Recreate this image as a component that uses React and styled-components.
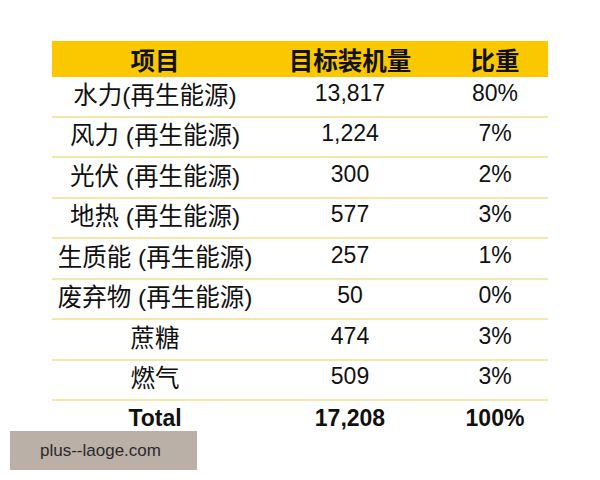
import React from 'react'
import styled, { createGlobalStyle } from 'styled-components'

const GlobalStyle = createGlobalStyle`
  html, body {
    margin: 0;
    padding: 0;
    background: #fff;
  }
  body {
    font-family: "Liberation Sans", "Noto Sans CJK SC", sans-serif;
  }
`

const rows = [
  { name: '水力(再生能源)', amount: '13,817', share: '80%' },
  { name: '风力 (再生能源)', amount: '1,224', share: '7%' },
  { name: '光伏 (再生能源)', amount: '300', share: '2%' },
  { name: '地热 (再生能源)', amount: '577', share: '3%' },
  { name: '生质能 (再生能源)', amount: '257', share: '1%' },
  { name: '废弃物 (再生能源)', amount: '50', share: '0%' },
  { name: '蔗糖', amount: '474', share: '3%' },
  { name: '燃气', amount: '509', share: '3%' },
]

const Page = styled.div`
  position: relative;
  width: 600px;
  height: 480px;
  padding: 41px 52px 0;
  box-sizing: border-box;
  overflow: hidden;
`

const Table = styled.div`
  display: grid;
  grid-template-columns: 206px 184px 106px;
  width: 496px;
`

const Row = styled.div`
  display: contents;
`

const Cell = styled.div`
  display: flex;
  align-items: center;
  justify-content: center;
  box-sizing: border-box;
  white-space: nowrap;
  color: #111;
  font-size: ${(p) => (p.$wide ? '24.5px' : '23px')};
  height: ${(p) => (p.$head ? '36px' : '40.5px')};
  padding-bottom: ${(p) => (p.$head ? '0' : '6px')};
  font-weight: ${(p) => (p.$bold ? 700 : 400)};
  background: ${(p) => (p.$head ? '#fbc800' : 'transparent')};
  border-bottom: ${(p) => (p.$line ? '2px solid #f3e8a8' : 'none')};
`

const Watermark = styled.div`
  position: absolute;
  left: 10px;
  top: 431px;
  width: 187px;
  height: 39px;
  box-sizing: border-box;
  padding-left: 30px;
  display: flex;
  align-items: center;
  background: #bbb0a7;
  color: #2a2a2a;
  font-family: "Liberation Sans", sans-serif;
  font-size: 17px;
`

export default function App() {
  return (
    <Page>
      <GlobalStyle />
      <Table>
        <Row>
          <Cell $head $bold $wide>项目</Cell>
          <Cell $head $bold $wide>目标装机量</Cell>
          <Cell $head $bold $wide>比重</Cell>
        </Row>
        {rows.map((r) => (
          <Row key={r.name}>
            <Cell $line $wide>{r.name}</Cell>
            <Cell $line>{r.amount}</Cell>
            <Cell $line>{r.share}</Cell>
          </Row>
        ))}
        <Row>
          <Cell $bold>Total</Cell>
          <Cell $bold>17,208</Cell>
          <Cell $bold>100%</Cell>
        </Row>
      </Table>
      <Watermark>plus--laoge.com</Watermark>
    </Page>
  )
}
